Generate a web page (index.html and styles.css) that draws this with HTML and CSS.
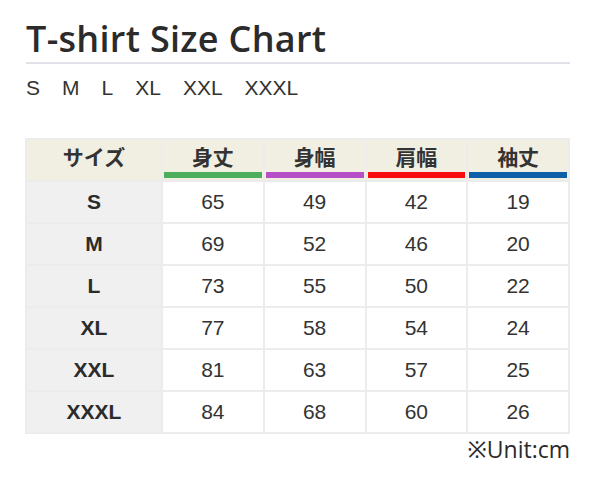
FILE: index.html
```html
<!DOCTYPE html>
<html lang="ja">
<head>
<meta charset="utf-8">
<title>T-shirt Size Chart</title>
<link rel="stylesheet" href="styles.css">
</head>
<body>
<div class="page">
  <h1 class="title">T-shirt Size Chart</h1>
  <div class="sizes">
    <span>S</span><span>M</span><span>L</span><span>XL</span><span>XXL</span><span>XXXL</span>
  </div>
  <table class="chart">
    <thead>
      <tr>
        <th class="corner"><div class="th-text">サイズ</div><div class="bar bar-none"></div></th>
        <th><div class="th-text">身丈</div><div class="bar bar-green"></div></th>
        <th><div class="th-text">身幅</div><div class="bar bar-purple"></div></th>
        <th><div class="th-text">肩幅</div><div class="bar bar-red"></div></th>
        <th><div class="th-text">袖丈</div><div class="bar bar-blue"></div></th>
      </tr>
    </thead>
    <tbody>
      <tr><td class="size">S</td><td>65</td><td>49</td><td>42</td><td>19</td></tr>
      <tr><td class="size">M</td><td>69</td><td>52</td><td>46</td><td>20</td></tr>
      <tr><td class="size">L</td><td>73</td><td>55</td><td>50</td><td>22</td></tr>
      <tr><td class="size">XL</td><td>77</td><td>58</td><td>54</td><td>24</td></tr>
      <tr><td class="size">XXL</td><td>81</td><td>63</td><td>57</td><td>25</td></tr>
      <tr><td class="size">XXXL</td><td>84</td><td>68</td><td>60</td><td>26</td></tr>
    </tbody>
  </table>
  <div class="unit">※Unit:cm</div>
</div>
</body>
</html>
```
FILE: styles.css
```css
html, body {
  margin: 0;
  padding: 0;
  background: #ffffff;
}
.page {
  width: 545px;
  padding: 18px 0 0 25px;
  color: #333333;
}
.title {
  margin: 0 0 0 1px;
  font-family: "Open Sans", "Noto Sans", sans-serif;
  font-weight: 600;
  font-size: 36px;
  line-height: 42px;
  letter-spacing: 0.3px;
  color: #2b2b2b;
  border-bottom: 2px solid #e3e0ea;
  padding-bottom: 2px;
}
.sizes {
  display: flex;
  gap: 22px;
  margin: 12px 0 0 1px;
  font-family: "Liberation Sans", Arial, sans-serif;
  font-size: 21px;
  line-height: 24px;
  color: #333333;
}
.chart {
  margin-top: 38px;
  width: 545px;
  border-collapse: collapse;
  table-layout: fixed;
  border: 2px solid #ececec;
}
.chart th, .chart td {
  border: 2px solid #ececec;
  text-align: center;
  padding: 0;
}
.chart th {
  background: #f0efe2;
  height: 38px;
  vertical-align: bottom;
  padding: 0 1px 2px;
  font-family: "Noto Sans CJK JP", sans-serif;
  font-weight: 700;
  font-size: 21px;
  color: #333333;
}
.chart th.corner {
  width: 132px;
}
.th-text {
  line-height: 26px;
  margin-bottom: 3px;
}
.bar {
  height: 6px;
}
.bar-none { background: transparent; }
.bar-green { background: #4cae5c; }
.bar-purple { background: #b64ec8; }
.bar-red { background: #f70d0d; }
.bar-blue { background: #0f5fa8; }
.chart td {
  height: 40px;
  background: #ffffff;
  font-family: "Liberation Sans", Arial, sans-serif;
  font-size: 21px;
  color: #333333;
}
.chart td.size {
  background: #f0f0f0;
  font-weight: 700;
  font-size: 21px;
  color: #2b2b2b;
}
.unit {
  text-align: right;
  font-family: "Open Sans", "Noto Sans", "Noto Sans CJK JP", sans-serif;
  font-size: 23px;
  line-height: 28px;
  margin-top: 1px;
  color: #2b2b2b;
}
```
